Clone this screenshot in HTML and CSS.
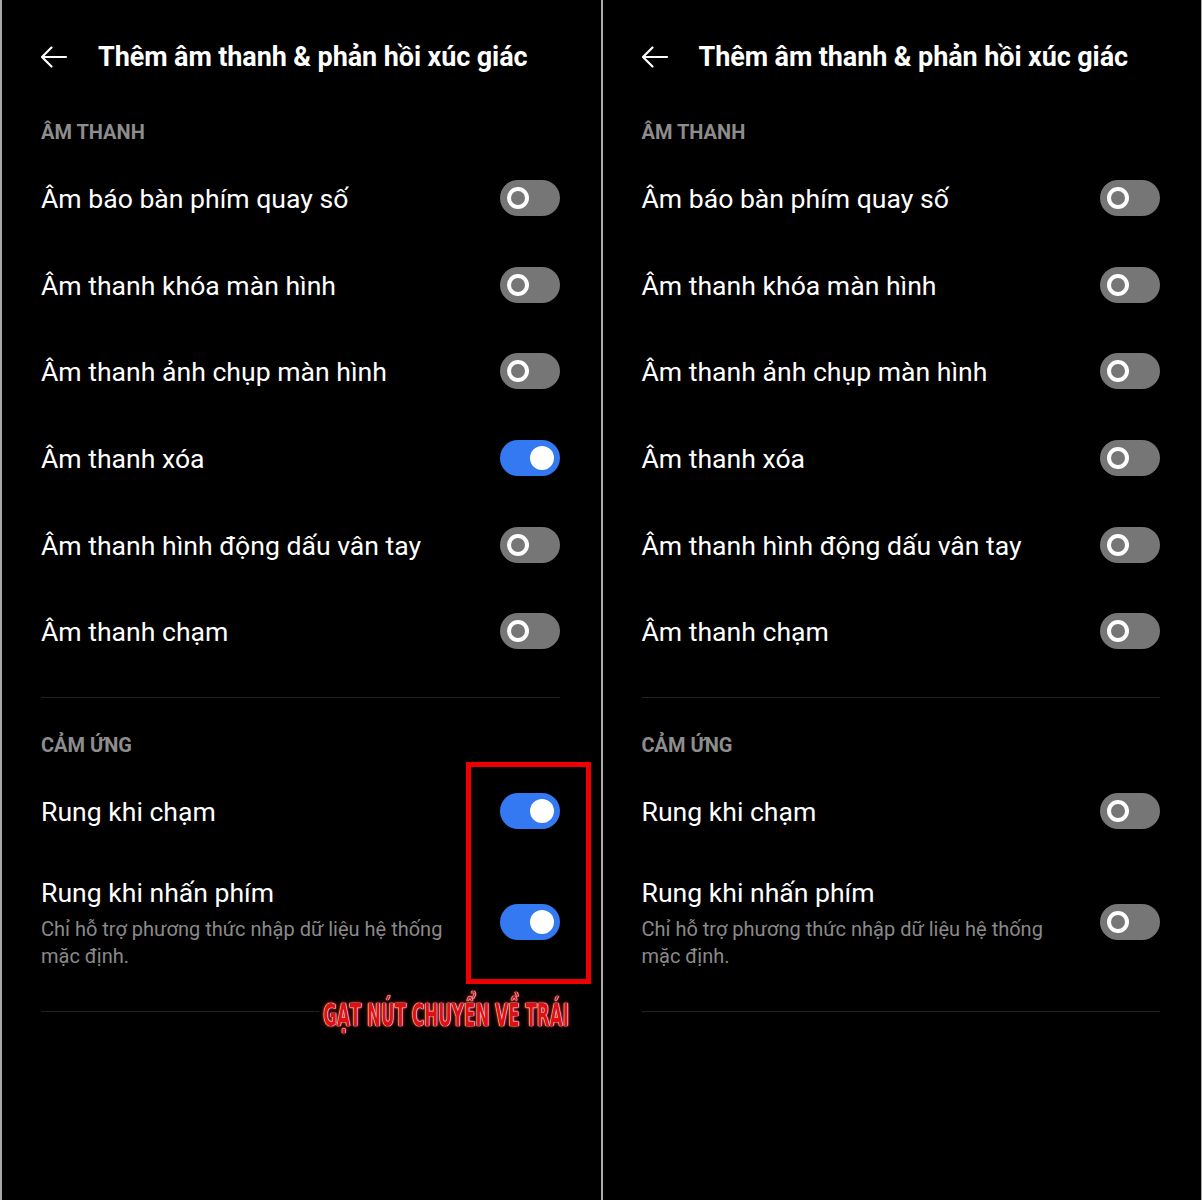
FILE: index.html
```html
<!DOCTYPE html>
<html lang="vi">
<head>
<meta charset="utf-8">
<title>Thêm âm thanh &amp; phản hồi xúc giác</title>
<meta name="viewport" content="width=device-width, initial-scale=1.0">
<link rel="stylesheet" href="styles.css">
</head>
<body>
<div class="screens">

  <!-- before: vibration switches still on -->
  <div class="phone">
    <div class="topbar">
      <svg class="back" width="28" height="24" viewBox="0 0 28 24"><path d="M26 12H2M11.5 2.5L2 12l9.5 9.5" fill="none" stroke="#fff" stroke-width="2.2" stroke-linecap="round" stroke-linejoin="round"/></svg>
      <h1>Thêm âm thanh &amp; phản hồi xúc giác</h1>
    </div>
    <div class="content">
      <div class="section-label">ÂM THANH</div>
      <div class="row"><span class="label">Âm báo bàn phím quay số</span><span class="switch"></span></div>
      <div class="row"><span class="label">Âm thanh khóa màn hình</span><span class="switch"></span></div>
      <div class="row"><span class="label">Âm thanh ảnh chụp màn hình</span><span class="switch"></span></div>
      <div class="row"><span class="label">Âm thanh xóa</span><span class="switch on"></span></div>
      <div class="row"><span class="label">Âm thanh hình động dấu vân tay</span><span class="switch"></span></div>
      <div class="row"><span class="label">Âm thanh chạm</span><span class="switch"></span></div>
      <div class="divider"></div>
      <div class="section-label">CẢM ỨNG</div>
      <div class="row"><span class="label">Rung khi chạm</span><span class="switch on"></span></div>
      <div class="row tall">
        <div class="text">
          <div class="label">Rung khi nhấn phím</div>
          <div class="desc">Chỉ hỗ trợ phương thức nhập dữ liệu hệ thống mặc định.</div>
        </div>
        <span class="switch on"></span>
      </div>
      <div class="divider"></div>
    </div>
    <div class="mark-box"></div>
    <div class="mark-text">GẠT NÚT CHUYỂN VỀ TRÁI</div>
  </div>

  <!-- after: everything off -->
  <div class="phone">
    <div class="topbar">
      <svg class="back" width="28" height="24" viewBox="0 0 28 24"><path d="M26 12H2M11.5 2.5L2 12l9.5 9.5" fill="none" stroke="#fff" stroke-width="2.2" stroke-linecap="round" stroke-linejoin="round"/></svg>
      <h1>Thêm âm thanh &amp; phản hồi xúc giác</h1>
    </div>
    <div class="content">
      <div class="section-label">ÂM THANH</div>
      <div class="row"><span class="label">Âm báo bàn phím quay số</span><span class="switch"></span></div>
      <div class="row"><span class="label">Âm thanh khóa màn hình</span><span class="switch"></span></div>
      <div class="row"><span class="label">Âm thanh ảnh chụp màn hình</span><span class="switch"></span></div>
      <div class="row"><span class="label">Âm thanh xóa</span><span class="switch"></span></div>
      <div class="row"><span class="label">Âm thanh hình động dấu vân tay</span><span class="switch"></span></div>
      <div class="row"><span class="label">Âm thanh chạm</span><span class="switch"></span></div>
      <div class="divider"></div>
      <div class="section-label">CẢM ỨNG</div>
      <div class="row"><span class="label">Rung khi chạm</span><span class="switch"></span></div>
      <div class="row tall">
        <div class="text">
          <div class="label">Rung khi nhấn phím</div>
          <div class="desc">Chỉ hỗ trợ phương thức nhập dữ liệu hệ thống mặc định.</div>
        </div>
        <span class="switch"></span>
      </div>
      <div class="divider"></div>
    </div>
  </div>

</div>
</body>
</html>
```

FILE: styles.css
```css
body {
  margin: 0;
  background: #000;
  font-family: Roboto, "Noto Sans", sans-serif;
  color: #fff;
}

.screens {
  display: flex;
  gap: 2px;
  padding: 0 1px 0 2px;
  background: #a9a9a9;
  height: 1200px;
}

.phone {
  position: relative;
  flex: 1;
  background: #000;
  overflow: hidden;
}

.topbar {
  height: 114px;
  display: flex;
  align-items: center;
  padding-left: 38px;
}

.back {
  margin-right: 30px;
  flex-shrink: 0;
}

.topbar h1 {
  margin: 0;
  font-size: 27px;
  font-weight: 700;
  letter-spacing: -0.1px;
}

.content {
  padding: 0 41px 0 39px;
}

.section-label {
  margin: 6px 0 11px;
  line-height: 24px;
  font-size: 20px;
  font-weight: 700;
  color: #8d8d8d;
}

.divider + .section-label {
  margin-top: 35px;
}

.row {
  height: 86.6px;
  display: flex;
  align-items: center;
  justify-content: space-between;
}

.label {
  font-size: 26.6px;
  line-height: 34px;
  padding-top: 2px;
}

.row.tall {
  height: auto;
  padding: 20px 0 21px;
}

.row.tall .text {
  flex: 1;
  padding-right: 40px;
}

.desc {
  margin-top: 6px;
  font-size: 20px;
  line-height: 27px;
  color: #8a8a8a;
}

.divider {
  height: 1px;
  margin-top: 22px;
  background: #222;
}

.row.tall + .divider {
  margin-top: 20px;
}

/* switches */
.switch {
  position: relative;
  flex-shrink: 0;
  width: 60px;
  height: 36px;
  border-radius: 18px;
  background: #767676;
}

.switch::after {
  content: "";
  position: absolute;
  left: 7px;
  top: 7px;
  width: 14px;
  height: 14px;
  border: 4px solid #fff;
  border-radius: 50%;
}

.switch.on {
  background: #3579f2;
}

.switch.on::after {
  left: auto;
  right: 6px;
  top: 6px;
  width: 24px;
  height: 24px;
  border: 0;
  background: #fff;
}

/* red annotation drawn over the first screen */
.mark-box {
  position: absolute;
  left: 464px;
  top: 762px;
  width: 115px;
  height: 212px;
  border: 5px solid #ee0000;
}

.mark-text {
  position: absolute;
  left: 317px;
  top: 999px;
  padding: 0 8px;
  background: #000;
  white-space: nowrap;
  font-family: "DejaVu Sans", sans-serif;
  font-weight: 700;
  font-size: 32px;
  line-height: 32px;
  color: #e01010;
  transform: scaleX(0.523);
  transform-origin: left center;
  text-shadow: 0 0 1px #fff, 0 0 1px #fff, 0 0 2px #fff, 0 0 6px #f22;
}
```
